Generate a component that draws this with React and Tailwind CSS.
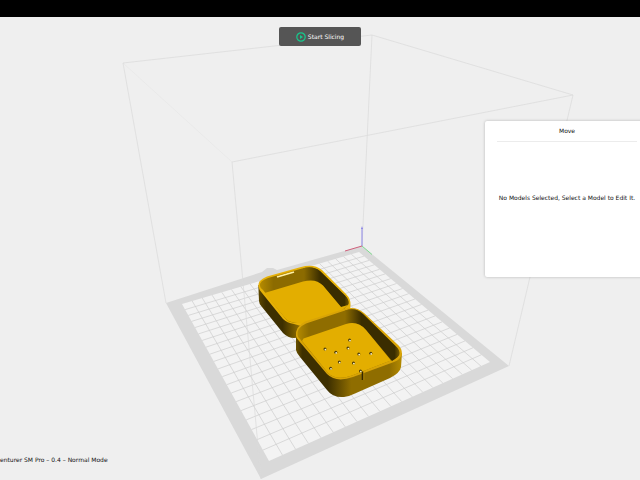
import React from "react";

const CELLS = 20;
const BACK = [359, 252];
const RIGHT = [490, 362];
const FRONT = [269, 461];
const LEFT = [182, 304];

// Perspective mapping of the unit square onto the build plate.
function project(u, v) {
  const sx = BACK[0] - RIGHT[0] + FRONT[0] - LEFT[0];
  const sy = BACK[1] - RIGHT[1] + FRONT[1] - LEFT[1];
  const dx1 = RIGHT[0] - FRONT[0];
  const dx2 = LEFT[0] - FRONT[0];
  const dy1 = RIGHT[1] - FRONT[1];
  const dy2 = LEFT[1] - FRONT[1];
  const det = dx1 * dy2 - dx2 * dy1;
  const g = (sx * dy2 - dx2 * sy) / det;
  const h = (dx1 * sy - sx * dy1) / det;
  const w = g * u + h * v + 1;
  const x = ((RIGHT[0] - BACK[0] + g * RIGHT[0]) * u + (LEFT[0] - BACK[0] + h * LEFT[0]) * v + BACK[0]) / w;
  const y = ((RIGHT[1] - BACK[1] + g * RIGHT[1]) * u + (LEFT[1] - BACK[1] + h * LEFT[1]) * v + BACK[1]) / w;
  return `${x.toFixed(2)} ${y.toFixed(2)}`;
}

const steps = Array.from({ length: CELLS - 1 }, (_, i) => (i + 1) / CELLS);
const gridPath = steps
  .map((t) => `M${project(t, 0)}L${project(t, 1)}M${project(0, t)}L${project(1, t)}`)
  .join("");

const HOLES = [
  [349.6, 340], [348, 348], [325, 349], [335.8, 352.3], [358.8, 354],
  [370.8, 353.3], [339.3, 362], [353.5, 363], [330.6, 368.2], [360.5, 371],
];

function Plate() {
  return (
    <g>
      <path d="M166 303L262 272L267 268L273 268L277 270L362 246L509 366L261 479Z" fill="#d9d9d9" />
      <path d="M182 304L359 252L490 362L269 461Z" fill="#f3f3f3" />
      <path d={gridPath} stroke="#cdcdcd" strokeWidth="0.7" fill="none" />
    </g>
  );
}

function Volume() {
  return (
    <g fill="none" stroke="#dadada" strokeWidth="0.7">
      <path d="M232 162L573 95L372 35L123 63" />
      <path d="M123 63L232 162" strokeOpacity="0.4" />
      <path d="M123 63L166 303M372 35L362 246M573 95L509 366M232 162L261 479" />
    </g>
  );
}

function Axes() {
  return (
    <g fill="none" strokeWidth="1">
      <path d="M362 246V228" stroke="#8c86e6" />
      <path d="M362 246L345 251" stroke="#d0607c" />
      <path d="M362 246L372 254.500" stroke="#7fdc8f" />
      <path d="M361 229L362 226L363 229Z" fill="#8c86e6" />
    </g>
  );
}

function Lid() {
  return (
    <g>
      <path d="M258.300 285L259 301Q259 304 262 307L283 333Q288 338 294 338Q299 338 306 334L306 318L262 286Z" fill="url(#lidSide)" />
      <path d="M258.300 286Q258 280 267 276.500L301 267Q314 263.500 322 270L346 294Q351 299 350.500 305L350 312L308 328L294 324Q287 323 283 319L262 293Q259 290 258.300 286Z" fill="#e6b108" />
      <path d="M260 286Q259 281 268 278L302 268.500Q313 265.500 320 271L345 295.500Q349 300 348.500 304L344 309L308 322L293 322.500Q288 322 285 318L263 290Q260 288 260 286Z" fill="url(#lidBack)" />
      <path d="M303 268.200Q313 265.500 320 271L345 295.500Q349.500 300 348.500 304Q347 307 341 307L323 286Q318 281 310 281.500L303 283Z" fill="url(#rightWall)" />
      <path d="M264.500 293L303 281.500Q316 278 323 285.500L341 307L348 305L340 312L308 325L295 322.500Q288 322 285 318Z" fill="#e3ae00" />
      <path d="M277 277L294 272" stroke="#fff1a8" strokeWidth="1.700" />
      <path d="M277 275.500L294 270.500" stroke="#d69e00" strokeWidth="0.700" />
    </g>
  );
}

function Base() {
  return (
    <g>
      <path d="M296 336V350Q296.500 353 300 357L327 390Q333 398 344 397Q349 396.500 355 393.500L390 378Q400 373 401 367L402 353L340 366Z" fill="url(#baseSide)" />
      <path d="M296 336Q295 327 305 321.500L344 309Q356 305.500 364 313L397 344Q402 348 402 354Q401 359 394 362L353 377Q336 383 327 374L299 341Q296 338 296 336Z" fill="#d9a406" />
      <path d="M297.500 335Q296.500 328 306 323.500L345 310.500Q356 307 363 314L395 345.500Q400 350 399 354Q399 357 392 360L352 375.500Q336 381 328 373L300 339Q297.500 337 297.500 335Z" fill="url(#baseBack)" />
      <path d="M345 310.500Q356 307 363 314L395 345.500Q400 350 399.500 354Q399 357 392 361L366 330Q360 323 351 323L345 324.500Z" fill="url(#rightWall2)" />
      <path d="M303.500 338.500L346 324Q358 320.500 366 330L391 360.500L383 363.500L352 375.500Q336 381 328 373L302 341Z" fill="#e3ae00" />
      {HOLES.map(([x, y]) => (
        <g key={`${x}-${y}`}>
          <circle cx={x} cy={y} r="1.500" fill="#4a3a08" />
          <circle cx={x + 0.4} cy={y + 0.6} r="0.9" fill="#fff4c4" />
        </g>
      ))}
      <path d="M362.500 371.500V380" stroke="#332700" strokeWidth="1.600" />
      <path d="M363.800 372V380" stroke="#c59606" strokeWidth="0.600" />
    </g>
  );
}

function Scene() {
  return (
    <svg
      className="absolute inset-0 h-full w-full"
      viewBox="0 17 640 463"
      preserveAspectRatio="xMidYMid meet"
      role="img"
      aria-label="Build plate with two box parts"
    >
      <defs>
        <linearGradient id="lidSide" gradientUnits="userSpaceOnUse" x1="259" y1="0" x2="306" y2="0">
          <stop offset="0" stopColor="#5b4600" />
          <stop offset="0.15" stopColor="#3d2f00" />
          <stop offset="0.5" stopColor="#3d2f00" />
          <stop offset="0.85" stopColor="#8c6b00" />
          <stop offset="1" stopColor="#8c6b00" />
        </linearGradient>
        <linearGradient id="lidBack" gradientUnits="userSpaceOnUse" x1="260" y1="0" x2="350" y2="0">
          <stop offset="0" stopColor="#b48a00" />
          <stop offset="0.15" stopColor="#8c6b00" />
          <stop offset="1" stopColor="#8c6b00" />
        </linearGradient>
        <linearGradient id="rightWall" gradientUnits="userSpaceOnUse" x1="304" y1="0" x2="350" y2="0">
          <stop offset="0" stopColor="#8c6b00" />
          <stop offset="0.35" stopColor="#3a2d00" />
          <stop offset="0.88" stopColor="#3a2d00" />
          <stop offset="1" stopColor="#7a5d00" />
        </linearGradient>
        <linearGradient id="baseSide" gradientUnits="userSpaceOnUse" x1="296" y1="0" x2="402" y2="0">
          <stop offset="0" stopColor="#6b5200" />
          <stop offset="0.06" stopColor="#3d2f00" />
          <stop offset="0.3" stopColor="#3d2f00" />
          <stop offset="0.52" stopColor="#8f6d00" />
          <stop offset="0.88" stopColor="#8f6d00" />
          <stop offset="1" stopColor="#b58b00" />
        </linearGradient>
        <linearGradient id="baseBack" gradientUnits="userSpaceOnUse" x1="297" y1="0" x2="345" y2="0">
          <stop offset="0" stopColor="#b58b00" />
          <stop offset="0.25" stopColor="#8f6d00" />
          <stop offset="1" stopColor="#8f6d00" />
        </linearGradient>
        <linearGradient id="rightWall2" gradientUnits="userSpaceOnUse" x1="345" y1="0" x2="400" y2="0">
          <stop offset="0" stopColor="#8f6d00" />
          <stop offset="0.3" stopColor="#3a2d00" />
          <stop offset="0.9" stopColor="#3a2d00" />
          <stop offset="1" stopColor="#7a5d00" />
        </linearGradient>
      </defs>
      <Plate />
      <Volume />
      <Axes />
      <Lid />
      <Base />
    </svg>
  );
}

export default function App() {
  return (
    <div className="flex min-h-screen flex-col overflow-hidden bg-[#efefef] font-['DejaVu_Sans','Noto_Sans',sans-serif] text-[6px] leading-3 text-[#111111]">
      <header className="h-[17px] bg-black" />
      <main className="relative flex grow flex-col justify-between overflow-hidden">
        <Scene />
        <div className="relative flex justify-center pt-[10px]">
          <button
            type="button"
            className="flex h-[19px] w-[82px] items-center justify-center gap-[2px] rounded-xs bg-[#555555] text-white"
          >
            <svg className="size-[10px]" viewBox="0 0 10 10" aria-hidden="true">
              <circle cx="5" cy="5" r="4.200" fill="none" stroke="#16c98d" strokeWidth="1.200" />
              <path d="M4 3L7 5L4 7Z" fill="#16c98d" />
            </svg>
            Start Slicing
          </button>
        </div>
        <section
          aria-labelledby="panel-title"
          className="absolute top-[104px] -right-[9px] flex h-[156px] w-[164px] flex-col rounded-xs bg-white px-3 shadow-[0_0_3px_rgba(0,0,0,0.25)]"
        >
          <h2 id="panel-title" className="border-b border-[#ececec] pt-1 pb-1 text-center">
            Move
          </h2>
          <p className="flex grow items-center justify-center pb-6 whitespace-nowrap">
            No Models Selected, Select a Model to Edit It.
          </p>
        </section>
        <footer className="relative pb-[14px] whitespace-nowrap">enturer SM Pro – 0.4 – Normal Mode</footer>
      </main>
    </div>
  );
}
